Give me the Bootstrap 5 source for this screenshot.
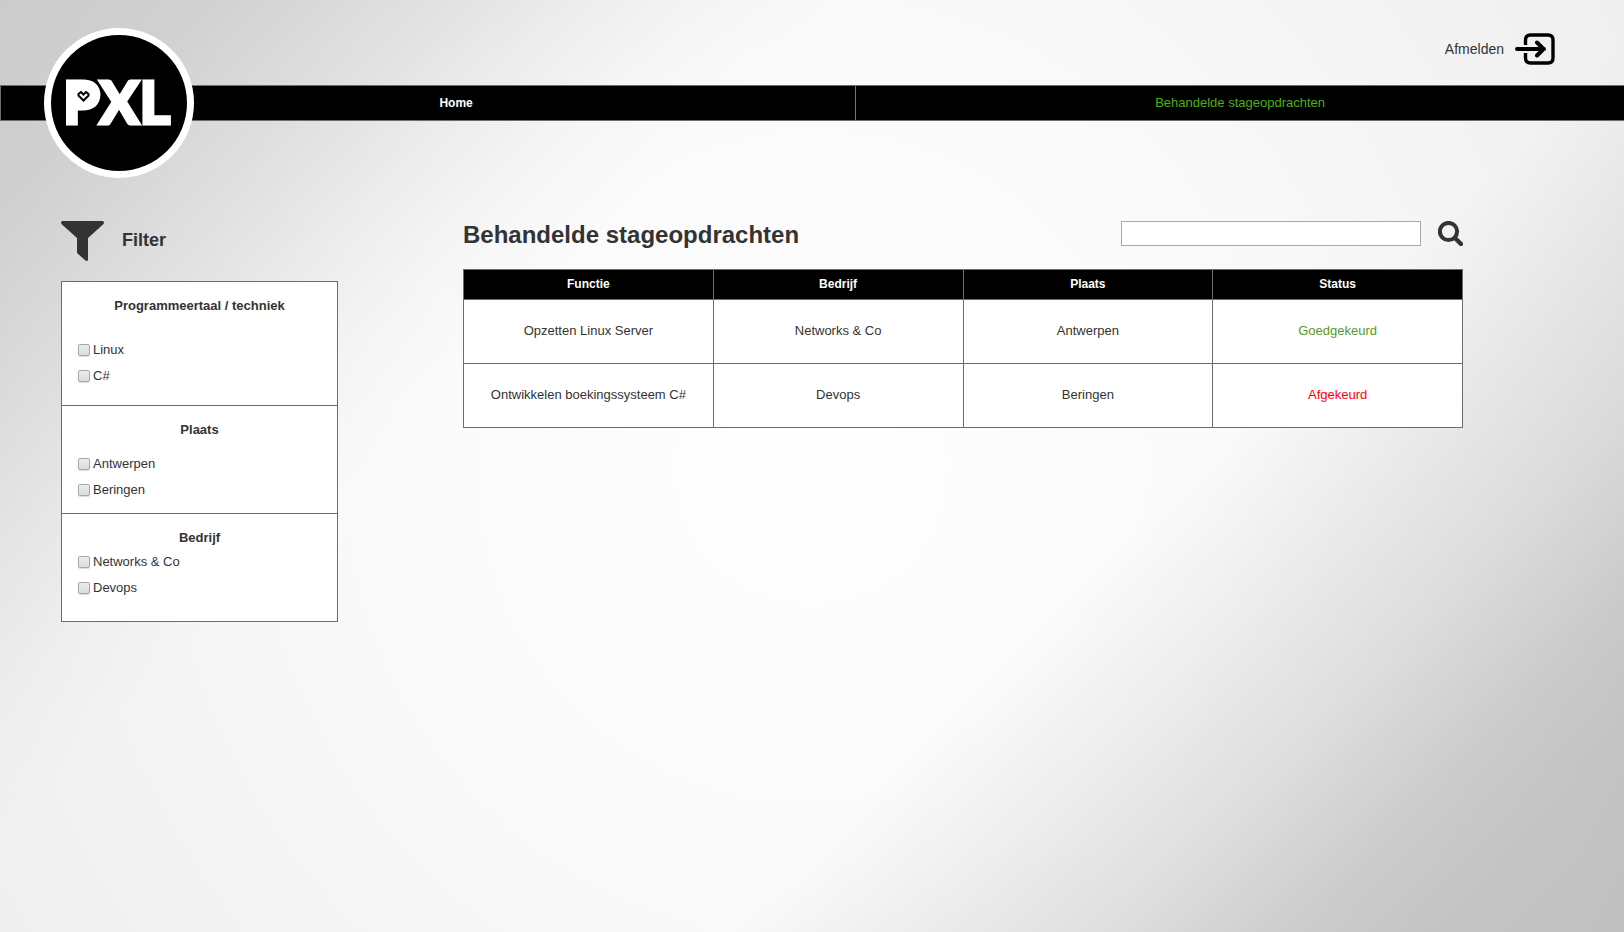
<!DOCTYPE html>
<html lang="nl">
<head>
<meta charset="utf-8">
<meta name="viewport" content="width=device-width, initial-scale=1">
<title>Behandelde stageopdrachten</title>
<link href="https://cdn.jsdelivr.net/npm/bootstrap@5.3.0/dist/css/bootstrap.min.css" rel="stylesheet">
<style>
  body {
    font: 13px/18px "Liberation Sans", Arial, sans-serif;
    color: #333;
    background:
      linear-gradient(135deg, rgba(0,0,0,.15) 0%, rgba(0,0,0,.14) 8%, rgba(0,0,0,.085) 17%, rgba(0,0,0,.05) 22%, rgba(0,0,0,.015) 28%, rgba(0,0,0,0) 33%, rgba(0,0,0,0) 65%, rgba(0,0,0,.1) 80%, rgba(0,0,0,.165) 87%, rgba(0,0,0,.19) 92%, rgba(0,0,0,.2) 100%),
      radial-gradient(circle farthest-corner at 50% 50%, #fefefe 0%, #fafafa 45%, #efefef 100%);
  }
  a { color: inherit; text-decoration: none; }
  .site-header { height: 85px; padding: 0 69px; }
  .sign-out { font-size: 14px; gap: 11px; margin-top: 13px; }
  .main-menu { height: 36px; background: #000; border: solid #6d6d6d; border-width: 1px 0 1px 1px; padding-left: 56px; }
  .main-menu .home-tab { flex: 0 0 51%; border-right: 1px solid #777; color: #fff; font-size: 12px; font-weight: 700; }
  .main-menu .active { color: #4caf1a; }
  .brand-logo { position: absolute; left: 44px; top: 28px; }
  .page-body { padding: 100px 161px 40px 61px; gap: 125px; }
  .filter-column { flex: 0 0 277px; }
  .filter-title { font-size: 18px; gap: 18px; margin-bottom: 20px; }
  .filter-title h2, .filter-box legend { font-size: inherit; }
  .filter-box { background: #fff; border: 1px solid #6d6d6d; }
  .filter-box fieldset { padding: 15px 16px 0; height: 108px; }
  .filter-box fieldset + fieldset { border-top: 1px solid #6d6d6d; }
  .filter-box fieldset:first-child { height: 123px; }
  .filter-box legend { font-weight: 700; line-height: 18px; margin-bottom: 12px; text-align: center; }
  .filter-box .legend-wide { margin-bottom: 22px; }
  .filter-box .legend-tight { margin-bottom: 2px; }
  .filter-box label { display: flex; align-items: center; gap: 3px; height: 26px; }
  .filter-box input {
    appearance: none; width: 12px; height: 12px; margin: 0;
    border: 1px solid #a8a8a8; border-radius: 2px;
    background: linear-gradient(#ececec, #dcdcdc); box-shadow: 0 1px 1px #ddd;
  }
  .page-title { font-size: 24px; line-height: 28px; }
  .search-field { width: 300px; height: 25px; border: 1px solid #a9a9a9; background: #fff; padding: 0 6px; }
  .results { table-layout: fixed; border-collapse: collapse; background: #fff; text-align: center; margin-top: 20px; }
  .results th, .results td { border: 1px solid #6d6d6d; padding: 0 0 2px; }
  .results th { height: 30px; background: #000; color: #fff; font-size: 12px; text-align: center; }
  .results td { height: 64px; }
  .approved { color: #5a9a22; }
  .rejected { color: #f00; }
</style>
</head>
<body class="min-vh-100 position-relative">
  <header>
    <div class="site-header d-flex justify-content-end align-items-center">
      <a href="#" class="sign-out d-flex align-items-center">Afmelden
        <svg width="40" height="32" viewBox="0 0 40 32" fill="none" stroke="#000" stroke-width="3.4" aria-hidden="true">
          <path d="M10.5 12V7Q10.5 2 15.500 2H33Q38 2 38 7V25Q38 30 33 30H15.500Q10.500 30 10.500 25V20"/>
          <path d="M2 16H29M22 9.500L28.500 16L22 22.500" stroke-width="4" stroke-linecap="round" stroke-linejoin="round"/>
        </svg>
      </a>
    </div>
    <nav class="main-menu d-flex align-items-stretch">
      <a href="#" class="home-tab d-flex align-items-center justify-content-center">Home</a>
      <a href="#" class="active flex-fill d-flex align-items-center justify-content-center">Behandelde stageopdrachten</a>
    </nav>
    <a href="#" class="brand-logo" aria-label="PXL">
      <svg class="d-block" width="150" height="150" viewBox="0 0 150 150">
        <circle cx="75" cy="75" r="75" fill="#fff"/>
        <circle cx="75" cy="75" r="68" fill="#000"/>
        <text x="19" y="96" font-family="Lato, sans-serif" font-weight="900" font-size="59" fill="#fff" stroke="#fff" stroke-width="3">PXL</text>
        <rect x="31" y="58" width="16" height="21" fill="#fff"/>
        <path d="M39.500 72.500L34.500 67.500V66L37 64L39.500 66.500L42 64L44.500 66V67.500Z" fill="none" stroke="#000" stroke-width="2"/>
      </svg>
    </a>
  </header>

  <main class="page-body d-flex align-items-start">
    <aside class="filter-column">
      <div class="filter-title d-flex align-items-center">
        <svg width="43" height="40" viewBox="0 0 43 40" fill="#333" aria-hidden="true">
          <path d="M1.500 0H41.500Q43 0 43 1.500Q43 2.500 42 3.500L27 17V39Q27 40 25 40L16 32V17L1 3.500Q0 2.500 0 1.500Q0 0 1.500 0Z"/>
        </svg>
        <h2 class="fw-bold m-0">Filter</h2>
      </div>
      <form class="filter-box">
        <fieldset>
          <legend class="legend-wide">Programmeertaal / techniek</legend>
          <label><input type="checkbox">Linux</label>
          <label><input type="checkbox">C#</label>
        </fieldset>
        <fieldset>
          <legend>Plaats</legend>
          <label><input type="checkbox">Antwerpen</label>
          <label><input type="checkbox">Beringen</label>
        </fieldset>
        <fieldset>
          <legend class="legend-tight">Bedrijf</legend>
          <label><input type="checkbox">Networks &amp; Co</label>
          <label><input type="checkbox">Devops</label>
        </fieldset>
      </form>
    </aside>

    <section class="flex-grow-1">
      <div class="d-flex justify-content-between align-items-start">
        <h1 class="page-title fw-bold m-0">Behandelde stageopdrachten</h1>
        <form class="d-flex gap-3" role="search">
          <input type="search" class="search-field" aria-label="Zoeken">
          <button type="submit" class="border-0 bg-transparent p-0 d-flex" aria-label="Zoek">
            <svg width="26" height="25" viewBox="0 0 26 25" fill="none" stroke="#333">
              <circle cx="11.500" cy="10.500" r="8.600" stroke-width="4"/>
              <path d="M18 17l6 6" stroke-width="4.500" stroke-linecap="round"/>
            </svg>
          </button>
        </form>
      </div>
      <table class="results w-100">
        <thead>
          <tr><th>Functie</th><th>Bedrijf</th><th>Plaats</th><th>Status</th></tr>
        </thead>
        <tbody>
          <tr><td>Opzetten Linux Server</td><td>Networks &amp; Co</td><td>Antwerpen</td><td class="approved">Goedgekeurd</td></tr>
          <tr><td>Ontwikkelen boekingssysteem C#</td><td>Devops</td><td>Beringen</td><td class="rejected">Afgekeurd</td></tr>
        </tbody>
      </table>
    </section>
  </main>
<script src="https://cdn.jsdelivr.net/npm/bootstrap@5.3.0/dist/js/bootstrap.bundle.min.js"></script>
</body>
</html>
